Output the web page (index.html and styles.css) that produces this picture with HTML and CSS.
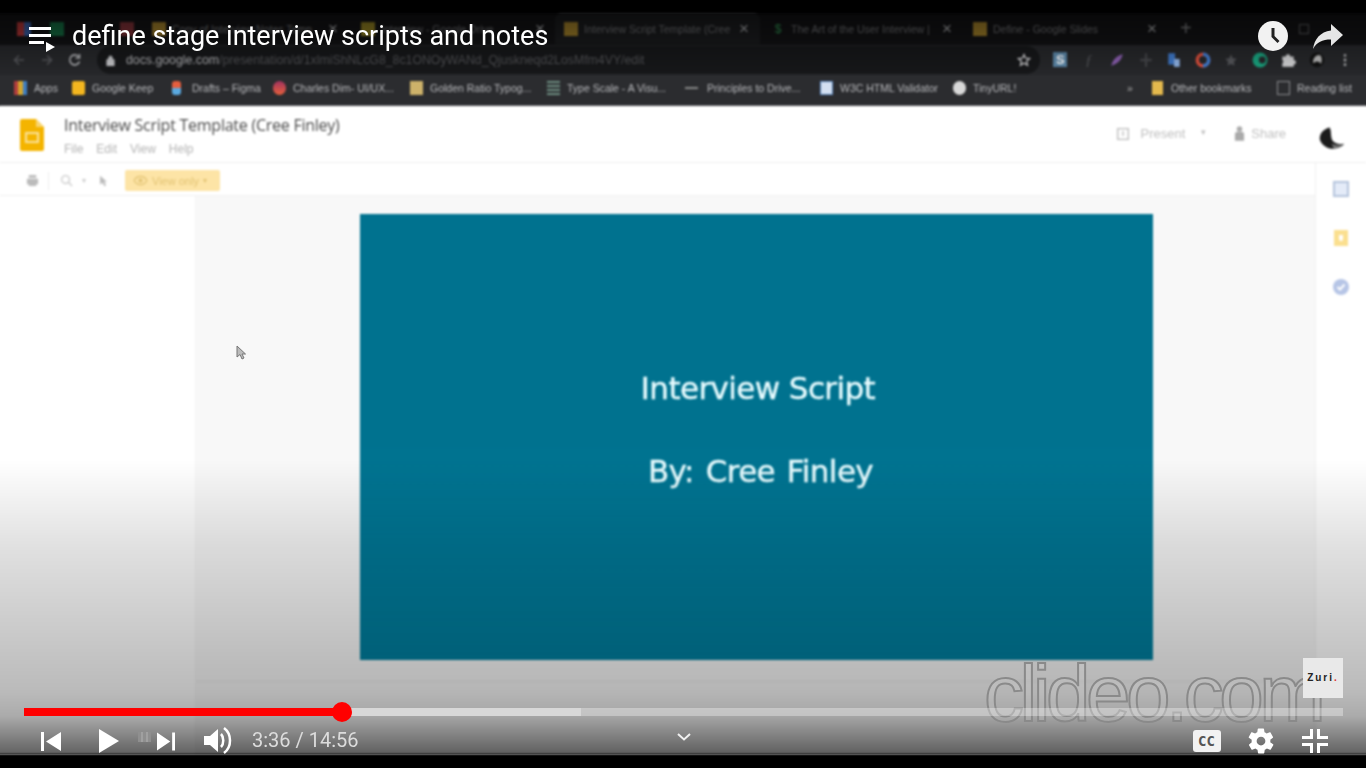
FILE: index.html
```html
<!DOCTYPE html>
<html>
    <head>
        <title>define stage interview scripts and notes</title>
        <link rel="stylesheet" href="styles.css">
    </head>
    <body>
        <div class="player">
            <div class="video">
                <!-- browser tabs -->
                <div class="tabs">
                    <span class="fav gmail"></span>
                    <span class="fav sheets"></span>
                    <span class="fav figma"></span>
                    <div class="tab"><span class="fav folder"></span><span class="tab-text">Copy of Interview Notes Temp</span><span class="tab-x">×</span></div>
                    <div class="tab"><span class="fav drive"></span><span class="tab-text">Interview - Google Drive</span><span class="tab-x">×</span></div>
                    <div class="tab"><span class="fav folder"></span><span class="tab-text">Interview Script Template (Cree</span><span class="tab-x">×</span></div>
                    <div class="tab"><span class="fav dollar">$</span><span class="tab-text">The Art of the User Interview |</span><span class="tab-x">×</span></div>
                    <div class="tab"><span class="fav folder"></span><span class="tab-text">Define - Google Slides</span><span class="tab-x">×</span></div>
                    <span class="new-tab">+</span>
                    <span class="restore"></span>
                </div>
                <!-- address bar -->
                <div class="toolbar">
                    <div class="nav">
                        <svg viewBox="0 0 14 14"><path d="M12 7H3M7 2.500 2.500 7 7 11.500" fill="none" stroke="#55565a" stroke-width="1.600"/></svg>
                        <svg viewBox="0 0 14 14"><path d="M2 7h9M7 2.500 11.500 7 7 11.500" fill="none" stroke="#55565a" stroke-width="1.600"/></svg>
                        <svg viewBox="0 0 14 14"><path d="M11.500 8.500A5 5 0 1 1 10.500 3.500M11.500 1v4h-4" fill="none" stroke="#b4b5b8" stroke-width="1.600"/></svg>
                    </div>
                    <div class="omnibox">
                        <svg class="lock" viewBox="0 0 10 12"><path d="M1 5h8v7H1zM3 5V3a2 2 0 0 1 4 0v2" fill="#c4c5c8" stroke="#c4c5c8"/></svg>
                        <span class="url"><b>docs.google.com</b>/presentation/d/1xlmiShNLcG8_8c1ONOyWANd_Qjuskneqd2LosMfm4VY/edit</span>
                        <svg class="star" viewBox="0 0 14 14"><path d="M7 1.500 8.600 5.200 12.600 5.600 9.600 8.200 10.500 12.200 7 10.100 3.500 12.200 4.400 8.200 1.400 5.600 5.400 5.200z" fill="none" stroke="#d0d0d2" stroke-width="1.300"/></svg>
                    </div>
                    <div class="extensions">
                        <span class="ext"><i class="ext-s">S</i></span>
                        <span class="ext"><i class="ext-f">ƒ</i></span>
                        <span class="ext"><svg viewBox="0 0 14 14"><path d="M2 12C3 7 7 3 12 2 11 7 8 10 2 12z" fill="#8b5fb0"/></svg></span>
                        <span class="ext"><svg viewBox="0 0 14 14"><path d="M7 1v12M2 7h10" stroke="#45464a" stroke-width="2"/></svg></span>
                        <span class="ext"><svg viewBox="0 0 14 14"><path d="M2 1h6v10H2z" fill="#3f78c8"/><path d="M7 6h5v7H7z" fill="#8fb3e6"/></svg></span>
                        <span class="ext"><svg viewBox="0 0 14 14"><circle cx="7" cy="7" r="5" fill="none" stroke="#e0503c" stroke-width="3"/><path d="M7 2a5 5 0 0 1 0 10" fill="none" stroke="#3c7fd8" stroke-width="3"/></svg></span>
                        <span class="ext"><svg viewBox="0 0 14 14"><path d="M7 2 8.500 5.500 12 6 9.500 8.500 10 12 7 10.300 4 12 4.500 8.500 2 6 5.500 5.500z" fill="#55565a"/></svg></span>
                        <span class="ext"><svg viewBox="0 0 14 14"><circle cx="7" cy="7" r="6.500" fill="#1aa37f"/><circle cx="9" cy="7" r="3" fill="#27282b"/></svg></span>
                        <span class="ext"><svg viewBox="0 0 14 14"><path d="M2 4h3a2 2 0 0 1 4 0h3v3a2 2 0 0 1 0 4v2H2v-3a2 2 0 0 0 0-3z" fill="#d4d4d6"/></svg></span>
                        <span class="ext"><svg viewBox="0 0 20 20"><circle cx="10" cy="10" r="9" fill="#111"/><path d="M5 14C5 7 9 3 14 4c3 3 2 8 1 11-2-4-6-4-10-1z" fill="#bbb"/></svg></span>
                        <span class="ext"><svg viewBox="0 0 14 14"><path d="M7 2v2M7 6v2M7 10v2" stroke="#c4c5c8" stroke-width="2"/></svg></span>
                    </div>
                </div>
                <!-- bookmarks -->
                <div class="bookmarks">
                    <div class="bm"><span class="bm-icon apps"></span>Apps</div>
                    <div class="bm"><span class="bm-icon keep"></span>Google Keep</div>
                    <div class="bm"><span class="bm-icon figma-b"></span>Drafts – Figma</div>
                    <div class="bm"><span class="bm-icon charles"></span>Charles Dim- UI/UX...</div>
                    <div class="bm"><span class="bm-icon golden"></span>Golden Ratio Typog...</div>
                    <div class="bm"><span class="bm-icon scale"></span>Type Scale - A Visu...</div>
                    <div class="bm"><span class="bm-icon dash"></span>Principles to Drive...</div>
                    <div class="bm"><span class="bm-icon w3c"></span>W3C HTML Validator</div>
                    <div class="bm"><span class="bm-icon globe"></span>TinyURL!</div>
                    <div class="bm more">»</div>
                    <div class="bm"><span class="bm-icon other"></span>Other bookmarks</div>
                    <div class="bm"><span class="bm-icon reading"></span>Reading list</div>
                </div>

                <!-- slides app -->
                <div class="docs-head">
                    <svg class="slides-logo" viewBox="0 0 24 32">
                        <path d="M2 0h14l8 8v22a2 2 0 0 1-2 2H2a2 2 0 0 1-2-2V2a2 2 0 0 1 2-2z" fill="#f4b400"/>
                        <path d="M16 0l8 8h-8z" fill="#f9d56e"/>
                        <path d="M6 14h12v9H6z" fill="none" stroke="#fbe39a" stroke-width="2"/>
                    </svg>
                    <div class="doc-info">
                        <div class="doc-title">Interview Script Template (Cree Finley)</div>
                        <div class="doc-menu"><span>File</span><span>Edit</span><span>View</span><span>Help</span></div>
                    </div>
                    <div class="doc-actions">
                        <svg class="act-icon" viewBox="0 0 12 12"><path d="M.7.700h10.600v10.600H.7zM6 3v5" fill="none" stroke="#bbb" stroke-width="1.300"/></svg>
                        <span class="present">Present</span>
                        <span class="caret">▾</span>
                        <svg class="act-person" viewBox="0 0 12 16"><circle cx="6" cy="3" r="3" fill="#aaa"/><path d="M1 16V9a3 3 0 0 1 3-3h4a3 3 0 0 1 3 3v7z" fill="#aaa"/></svg>
                        <span class="share">Share</span>
                        <svg class="doc-avatar" viewBox="0 0 28 26">
                            <path d="M12 2C5 4 1 9 2 15c2 6 9 10 16 9 5-1 8-3 9-5-6 1-12-1-13-6-1-4 0-8-2-11z" fill="#1b1b1b"/>
                            <path d="M14 19c4 2 8 2 12 0-2 3-6 5-10 4z" fill="#777"/>
                        </svg>
                    </div>
                </div>
                <div class="docs-main">
                    <div class="workspace">
                        <div class="docs-tools">
                            <svg class="tool print" viewBox="0 0 14 14"><path d="M3 1h8v3H3zM1 5h12v6h-2v2H3v-2H1z" fill="#bbb"/></svg>
                            <span class="tool-sep"></span>
                            <svg class="tool zoom" viewBox="0 0 14 14"><circle cx="6" cy="6" r="4.200" fill="none" stroke="#ccc" stroke-width="1.500"/><path d="M9 9l4 4" stroke="#ccc" stroke-width="1.500"/></svg>
                            <span class="tool-caret">▾</span>
                            <svg class="tool pointer" viewBox="0 0 10 14"><path d="M1 1v10l3-2 2 4 2-1-2-4h3z" fill="#bbb"/></svg>
                            <div class="view-only">
                                <svg viewBox="0 0 16 12"><path d="M1 6c3-6 11-6 14 0-3 6-11 6-14 0z" fill="none" stroke="#e2c373" stroke-width="1.300"/><circle cx="8" cy="6" r="2.300" fill="#e2c373"/></svg>
                                View only <span class="vo-caret">▾</span>
                            </div>
                        </div>
                        <div class="stage">
                            <div class="filmstrip"></div>
                            <div class="canvas">
                                <div class="slide">
                                    <div class="slide-line">Interview Script</div>
                                    <div class="slide-line">By: Cree Finley</div>
                                </div>
                                <div class="notes"></div>
                            </div>
                        </div>
                    </div>
                    <div class="sidepanel">
                        <svg viewBox="0 0 16 16"><path d="M1 1h14v14H1z" fill="#e4ebf8" stroke="#b5c4dc" stroke-width="2"/></svg>
                        <svg viewBox="0 0 16 16"><path d="M1 0h14v16H1z" fill="#fbdf8f"/><path d="M6 5h4v4l-1 2H7L6 9z" fill="#fff"/></svg>
                        <svg viewBox="0 0 16 16"><circle cx="8" cy="8" r="8" fill="#b6c5e6"/><path d="M4.500 8 7 10.500 11.500 5.500" fill="none" stroke="#fff" stroke-width="2"/></svg>
                    </div>
                </div>
            </div>

            <svg class="mouse" viewBox="0 0 10 15"><path d="M1 1v11l3-2.500 2 4.500 2-1-2-4h3.500z" fill="#bbb" stroke="#777"/></svg>

            <!-- player overlays -->
            <div class="shade-top"></div>
            <div class="shade-bottom"></div>
            <div class="topbar">
                <svg class="playlist" viewBox="0 0 26 32">
                    <path d="M0 7h22v3H0zM0 14h22v3H0zM0 21h15v3H0z" fill="#fff"/>
                    <path d="M17 22l9 5-9 5z" fill="#fff"/>
                </svg>
                <div class="video-title">define stage interview scripts and notes</div>
                <svg class="clock" viewBox="0 0 30 30"><circle cx="15" cy="15" r="15" fill="#f2f2f2"/><path d="M13.500 7h3v8l5 5-2 2-6-6z" fill="#222"/></svg>
                <svg class="share-arrow" viewBox="0 0 30 25"><path d="M18 0l12 11-12 11v-6.500C9 15.500 4 18 0 25 1.500 15 7 8 18 6.500z" fill="#e6e6e6"/></svg>
            </div>

            <div class="watermark">clideo.com</div>
            <div class="zuri">Zuri<span class="zuri-dot">.</span></div>

            <div class="controls">
                <div class="progress">
                    <div class="buffered"></div>
                    <div class="played"><span class="knob"></span></div>
                </div>
                <div class="buttons">
                    <svg class="btn prev" viewBox="0 0 20 19"><path d="M0 0h3v19H0zM20 0v19L5 9.500z" fill="#fff"/></svg>
                    <svg class="btn play" viewBox="0 0 20 24"><path d="M0 0l20 12L0 24z" fill="#fff"/></svg>
                    <span class="blip"></span>
                    <svg class="btn next" viewBox="0 0 19 19"><path d="M0 0l14 9.500L0 19zM16 0h3v19h-3z" fill="#fff"/></svg>
                    <svg class="btn volume" viewBox="0 0 29 27">
                        <path d="M0 9h6l8-7v23l-8-7H0z" fill="#fff"/>
                        <path d="M17 7c3 3 3 10 0 13" fill="none" stroke="#fff" stroke-width="2.500"/>
                        <path d="M20 1c8 6 8 19 0 25" fill="none" stroke="#fff" stroke-width="2.500"/>
                    </svg>
                    <span class="time">3:36 / 14:56</span>
                    <svg class="btn chevron" viewBox="0 0 14 8"><path d="M1 1l6 5.500L13 1" fill="none" stroke="#f0f0f0" stroke-width="2"/></svg>
                    <span class="cc">CC</span>
                    <svg class="btn gear" viewBox="0 0 24 24"><path fill="#fff" d="M19.400 13c0-.3.100-.6.100-1s0-.7-.1-1l2.100-1.700c.2-.1.200-.4.100-.6l-2-3.500c-.1-.2-.4-.3-.6-.2l-2.500 1c-.5-.4-1.100-.7-1.700-1l-.4-2.600c0-.2-.2-.4-.5-.4h-4c-.2 0-.5.200-.5.400l-.4 2.600c-.6.300-1.200.6-1.700 1l-2.500-1c-.2-.1-.5 0-.6.200l-2 3.500c-.1.200-.1.500.1.600L4.600 11c0 .3-.1.600-.1 1s0 .7.100 1l-2.100 1.700c-.2.100-.2.400-.1.600l2 3.500c.1.200.4.300.6.200l2.500-1c.5.400 1.100.7 1.700 1l.4 2.600c0 .2.300.4.500.4h4c.2 0 .5-.2.500-.4l.4-2.600c.6-.3 1.200-.6 1.700-1l2.500 1c.2.100.5 0 .6-.2l2-3.500c.1-.2.100-.5-.1-.6zM12 15.500a3.500 3.500 0 1 1 0-7 3.500 3.500 0 0 1 0 7z"/></svg>
                    <svg class="btn exit-full" viewBox="0 0 26 24"><path fill="#fff" d="M8 0h3v10H0V7h8zM15 0h3v7h8v3H15zM0 14h11v10H8v-7H0zM15 14h11v3h-8v7h-3z"/></svg>
                </div>
            </div>
        </div>
    </body>
</html>
```

FILE: styles.css
```css
body {
    margin: 0;
    background: #fff;
    font-family: "Liberation Sans", Arial, sans-serif;
}
svg {
    display: block;
}
.player {
    position: relative;
    height: 768px;
    padding: 14px 0;
    box-sizing: border-box;
    background: #000;
    overflow: hidden;
}
.video {
    height: 740px;
    display: flex;
    flex-direction: column;
    background: #fff;
    filter: blur(0.8px);
}

/* browser tabs */
.tabs {
    height: 31px;
    flex: none;
    box-sizing: border-box;
    padding-bottom: 2px;
    display: flex;
    align-items: center;
    background: #121214;
    box-shadow: 4px 0 #121214, -4px 0 #121214;
    color: #6a6b6e;
    font-size: 10.5px;
}
.fav {
    display: block;
    flex: none;
    width: 14px;
    height: 14px;
}
.gmail {
    margin-left: 17px;
    background: linear-gradient(90deg, #a33 0, #a33 50%, #35589a 50%);
}
.sheets {
    margin-left: 19px;
    background: #14683f;
}
.figma {
    margin-left: 56px;
    background: #7a2f35;
}
.folder {
    background: #9a7a28;
}
.drive {
    background: #8a7a20;
}
.dollar {
    color: #2f8d4e;
    font-size: 12px;
    line-height: 14px;
    text-align: center;
}
.tab {
    height: 31px;
    flex: none;
    box-sizing: border-box;
    display: flex;
    align-items: center;
}
.tab:nth-of-type(1) {
    width: 223px;
    margin-left: 4px;
    padding: 0 20px 0 14px;
}
.tab:nth-of-type(2) {
    width: 194px;
    padding-right: 7px;
}
.tab:nth-of-type(3) {
    width: 205px;
    padding: 0 8px 0 9px;
    background: #1a1b1d;
    border-radius: 6px 6px 0 0;
}
.tab:nth-of-type(4) {
    width: 213px;
    padding: 0 18px 0 11px;
}
.tab:nth-of-type(5) {
    width: 194px;
    padding-right: 7px;
}
.tab-text {
    flex: 1;
    margin-left: 6px;
    white-space: nowrap;
    overflow: hidden;
}
.tab-x {
    width: 16px;
    font-size: 17px;
    color: #a0a1a4;
    text-align: center;
}
.new-tab {
    margin-left: 13px;
    font-size: 20px;
    color: #77787b;
}
.restore {
    width: 8px;
    height: 8px;
    margin-left: 107px;
    border: 1px solid #55565a;
}

/* address bar */
.toolbar {
    height: 30px;
    flex: none;
    display: flex;
    align-items: center;
    background: #27282b;
    box-shadow: 4px 0 #27282b, -4px 0 #27282b;
}
.nav {
    width: 97px;
    flex: none;
    box-sizing: border-box;
    padding-left: 12px;
    display: flex;
    gap: 14px;
}
.nav svg {
    width: 14px;
    height: 14px;
}
.omnibox {
    width: 943px;
    height: 28px;
    flex: none;
    box-sizing: border-box;
    padding: 0 9px;
    display: flex;
    align-items: center;
    background: #17181a;
    border-radius: 14px;
    color: #505154;
    font-size: 12.3px;
}
.lock {
    width: 9px;
    height: 11px;
    flex: none;
}
.url {
    flex: 1;
    margin-left: 11px;
    white-space: nowrap;
}
.url b {
    font-weight: normal;
    color: #b0b1b4;
}
.star {
    width: 14px;
    height: 14px;
}
.extensions {
    display: flex;
    margin-left: 6px;
}
.ext {
    width: 28.5px;
    height: 16px;
    flex: none;
    display: flex;
    justify-content: center;
    font-style: normal;
}
.ext svg {
    width: 16px;
    height: 16px;
}
.ext-s {
    width: 14px;
    height: 15px;
    background: #5b87a8;
    color: #fff;
    font: bold 13px/15px "Liberation Sans", sans-serif;
    text-align: center;
}
.ext-f {
    color: #55565a;
    font: italic 15px/16px "Liberation Serif", serif;
}

/* bookmarks */
.bookmarks {
    height: 31px;
    flex: none;
    box-sizing: border-box;
    padding: 0 0 4px 14px;
    display: grid;
    grid-template-columns: 58px 100px 101px 137px 137px 138px 135px 133px 174px 25px 125px auto;
    align-items: center;
    background: #2b2c2f;
    border-bottom: 1px solid #55565a;
    box-shadow: 4px 0 #2b2c2f, -4px 0 #2b2c2f;
    color: #b8b9bc;
    font-size: 10.5px;
    white-space: nowrap;
}
.bm {
    display: flex;
    align-items: center;
    gap: 7px;
}
.bm-icon {
    display: block;
    width: 13px;
    height: 14px;
    flex: none;
}
.apps {
    background: linear-gradient(90deg, #b13d3d 33%, #d3a52c 33%, #d3a52c 66%, #3f7ec0 66%);
}
.keep {
    background: #f3b61f;
    border-radius: 2px;
}
.figma-b {
    width: 9px;
    margin-right: 4px;
    background: linear-gradient(#e55e3e 50%, #5aa9e0 50%);
    border-radius: 3px;
}
.charles {
    background: linear-gradient(#a1325f, #e6603c);
    border-radius: 7px;
}
.golden {
    background: #cdb26a;
}
.scale {
    background: repeating-linear-gradient(#6f8f83 0 2px, transparent 2px 4px);
}
.dash {
    height: 2px;
    background: #888;
    margin-right: 2px;
}
.w3c {
    background: #d3dff0;
    border: 1px solid #5985bd;
    box-sizing: border-box;
}
.globe {
    background: #d8d8d8;
    border-radius: 7px;
}
.other {
    width: 11px;
    background: #e4b94d;
    margin-right: 1px;
}
.reading {
    border: 1px solid #8a8b8e;
    box-sizing: border-box;
}
.more {
    color: #aaa;
}

/* slides header */
.docs-head {
    height: 57px;
    flex: none;
    box-sizing: border-box;
    display: flex;
    padding: 13px 21px 0 20px;
    background: #fff;
    border-bottom: 1px solid #eee;
    box-shadow: 4px 0 #fff, -4px 0 #fff;
}
.slides-logo {
    width: 24px;
    height: 32px;
    flex: none;
}
.doc-info {
    margin-left: 20px;
    margin-top: -4px;
}
.doc-title {
    color: #4a4a4a;
    font-family: "Open Sans", sans-serif;
    font-size: 16px;
    line-height: 20px;
    letter-spacing: -0.25px;
}
.doc-menu {
    display: flex;
    gap: 13px;
    margin-top: 7px;
    color: #b4b4b4;
    font-size: 12px;
}
.doc-actions {
    margin-left: auto;
    display: flex;
    align-items: flex-start;
    color: #c0c0c0;
    font-size: 13px;
}
.act-icon {
    width: 12px;
    height: 12px;
    margin-top: 9px;
}
.present {
    margin: 7px 0 0 11px;
}
.caret {
    margin: 8px 0 0 16px;
    font-size: 9px;
}
.act-person {
    width: 11px;
    height: 15px;
    margin: 7px 0 0 28px;
}
.share {
    margin: 7px 0 0 6px;
}
.doc-avatar {
    width: 27px;
    height: 26px;
    margin: 6px 0 0 32px;
}

/* slides body */
.docs-main {
    flex: 1;
    display: flex;
    min-height: 0;
    box-shadow: 4px 0 #fff, -4px 0 #fff;
}
.workspace {
    flex: 1;
    display: flex;
    flex-direction: column;
}
.docs-tools {
    height: 33px;
    flex: none;
    box-sizing: border-box;
    padding: 3px 0 0 26px;
    display: flex;
    align-items: center;
    background: #fff;
    border-bottom: 1px solid #f0f0f0;
}
.tool {
    flex: none;
}
.print {
    width: 13px;
    height: 13px;
}
.tool-sep {
    width: 1px;
    height: 18px;
    margin: 0 11px 0 9px;
    background: #eee;
}
.zoom {
    width: 13px;
    height: 13px;
}
.tool-caret {
    margin-left: 9px;
    font-size: 8px;
    color: #ccc;
}
.pointer {
    width: 9px;
    height: 12px;
    margin-left: 13px;
}
.view-only {
    width: 95px;
    height: 21px;
    margin-left: 17px;
    box-sizing: border-box;
    padding-left: 8px;
    display: flex;
    align-items: center;
    gap: 4px;
    background: #fde4a6;
    border-radius: 2px;
    color: #e2c373;
    font-size: 11px;
    white-space: nowrap;
}
.view-only svg {
    width: 15px;
    height: 11px;
    flex: none;
}
.vo-caret {
    font-size: 8px;
}
.stage {
    flex: 1;
    display: flex;
}
.filmstrip {
    width: 195px;
    flex: none;
    background: #fff;
    border-right: 1px solid #f4f4f4;
}
.canvas {
    flex: 1;
    background: #f8f8f8;
    padding: 18px 0 0 164px;
    display: flex;
    flex-direction: column;
}
.slide {
    width: 793px;
    height: 446px;
    flex: none;
    box-sizing: border-box;
    padding-top: 156px;
    display: flex;
    flex-direction: column;
    align-items: center;
    gap: 47px;
    background: linear-gradient(#00728f 0, #00728f 50%, #007f9f 100%);
    color: #e8fcff;
    font-family: "DejaVu Sans", sans-serif;
    font-size: 31px;
    line-height: 36px;
    letter-spacing: -0.6px;
    -webkit-text-stroke: 0.4px #e8fcff;
}
.slide-line {
    margin-left: 3px;
}
.slide-line + .slide-line {
    margin-left: 8px;
    word-spacing: 2.5px;
}
.notes {
    margin: 21px 0 0 -164px;
    border-top: 1px solid #ececec;
}
.sidepanel {
    width: 51px;
    flex: none;
    box-sizing: border-box;
    padding: 18px 0 0 17px;
    display: flex;
    flex-direction: column;
    gap: 33px;
    background: #fff;
    border-left: 1px solid #f0f0f0;
}
.sidepanel svg {
    width: 16px;
    height: 16px;
}
.mouse {
    position: absolute;
    left: 236px;
    top: 345px;
    width: 10px;
    height: 15px;
}

/* player overlays */
.shade-top {
    position: absolute;
    left: 0;
    right: 0;
    top: 14px;
    height: 62px;
    background: linear-gradient(rgba(0, 0, 0, 0.5), rgba(0, 0, 0, 0));
}
.shade-bottom {
    position: absolute;
    left: 0;
    right: 0;
    top: 460px;
    height: 294px;
    background: linear-gradient(rgba(0, 0, 0, 0) 0, rgba(0, 0, 0, 0.12) 30%, rgba(0, 0, 0, 0.27) 79%, rgba(0, 0, 0, 0.33) 87%, rgba(0, 0, 0, 0.62) 100%);
}
.topbar {
    position: absolute;
    left: 29px;
    right: 23px;
    top: 20px;
    height: 32px;
    display: flex;
    align-items: center;
}
.playlist {
    width: 26px;
    height: 32px;
    flex: none;
}
.video-title {
    margin-left: 17px;
    flex: 1;
    color: #fff;
    font-family: Roboto, sans-serif;
    font-size: 27px;
}
.clock {
    width: 30px;
    height: 30px;
    flex: none;
}
.share-arrow {
    width: 30px;
    height: 25px;
    flex: none;
    margin-left: 25px;
}
.watermark {
    position: absolute;
    left: 984px;
    top: 652px;
    color: rgba(255, 255, 255, 0.08);
    -webkit-text-stroke: 2px #8a8a8a;
    font-family: "Liberation Sans", sans-serif;
    font-size: 80px;
    line-height: 84px;
    letter-spacing: -4.5px;
}
.zuri {
    position: absolute;
    left: 1303px;
    top: 658px;
    width: 40px;
    height: 40px;
    background: #e9e9e9;
    color: #222;
    font-family: "Liberation Sans", sans-serif;
    font-size: 10px;
    font-weight: bold;
    line-height: 40px;
    letter-spacing: 2px;
    text-align: center;
}
.zuri-dot {
    color: #e03030;
}
.controls {
    position: absolute;
    left: 24px;
    top: 702px;
    width: 1319px;
    height: 52px;
}
.progress {
    position: relative;
    margin-top: 6px;
    height: 8px;
    background: rgba(255, 255, 255, 0.32);
}
.buffered {
    position: absolute;
    left: 0;
    top: 0;
    bottom: 0;
    width: 557px;
    background: #d8d8d8;
}
.played {
    position: absolute;
    left: 0;
    top: 0;
    bottom: 0;
    width: 318px;
    background: #f00;
}
.knob {
    position: absolute;
    right: -10px;
    top: -6px;
    width: 20px;
    height: 20px;
    border-radius: 50%;
    background: #f00;
}
.buttons {
    display: flex;
    align-items: flex-start;
    height: 38px;
}
.btn {
    flex: none;
}
.prev {
    width: 20px;
    height: 19px;
    margin: 16px 0 0 17px;
}
.play {
    width: 20px;
    height: 24px;
    margin: 13px 0 0 38px;
}
.blip {
    width: 13px;
    height: 10px;
    flex: none;
    margin: 16px 0 0 19px;
    background: repeating-linear-gradient(90deg, #8f8f8f 0 3px, #a0a0a0 3px 5px);
}
.next {
    width: 18px;
    height: 19px;
    margin: 16px 0 0 6px;
}
.volume {
    width: 29px;
    height: 27px;
    margin: 11px 0 0 29px;
}
.time {
    margin: 12px 0 0 19px;
    color: #dcdcdc;
    font-family: Roboto, sans-serif;
    font-size: 20px;
    line-height: 24px;
    white-space: nowrap;
}
.chevron {
    width: 14px;
    height: 8px;
    margin: 17px 0 0 318px;
}
.cc {
    width: 28px;
    height: 22px;
    flex: none;
    margin: 14px 0 0 502px;
    background: #f2f2f2;
    border-radius: 3px;
    color: #555;
    font-family: "DejaVu Sans Mono", monospace;
    font-size: 14px;
    font-weight: bold;
    line-height: 22px;
    text-align: center;
}
.gear {
    width: 30px;
    height: 30px;
    margin: 10px 0 0 25px;
}
.exit-full {
    width: 26px;
    height: 24px;
    margin: 13px 0 0 26px;
}
```
